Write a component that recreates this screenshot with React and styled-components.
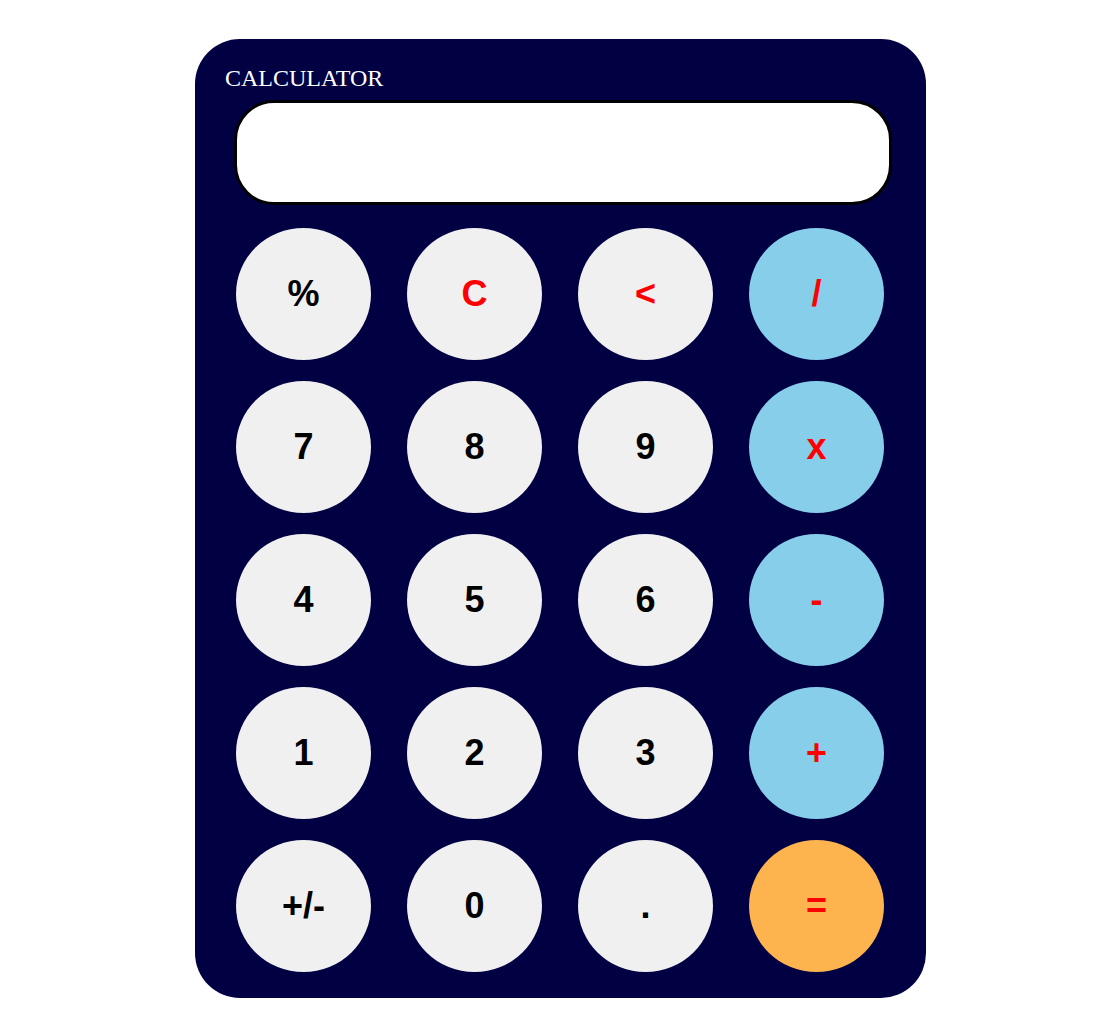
import React from "react";
import styled, { createGlobalStyle } from "styled-components";

const Global = createGlobalStyle`
  html, body { margin: 0; padding: 0; background: #ffffff; }
  body { font-family: "Liberation Serif", "Times New Roman", serif; }
`;

const Page = styled.div`
  padding: 39px 0 29px 195px;
`;

const Panel = styled.div`
  width: 731px;
  box-sizing: border-box;
  background: #000042;
  border-radius: 45px;
  padding: 0 34px 26px 30px;
  display: flex;
  flex-direction: column;
`;

const Title = styled.div`
  margin-top: 26.4px;
  color: #ffffff;
  font-family: "Liberation Serif", "Times New Roman", serif;
  font-size: 24px;
  line-height: 26.9px;
`;

const Display = styled.div`
  margin: 7.5px 0 0 9px;
  height: 105px;
  box-sizing: border-box;
  background: #ffffff;
  border: 3px solid #000000;
  border-radius: 40px;
`;

const Keypad = styled.div`
  margin: 23px 0 0 11px;
  display: grid;
  grid-template-columns: repeat(4, 135px);
  grid-auto-rows: 132px;
  column-gap: 36px;
  row-gap: 21px;
`;

const bg = { num: "#f0f0f0", op: "#87ceeb", eq: "#fdb44f" };

const Key = styled.button`
  border: none;
  padding: 0;
  margin: 0;
  width: 135px;
  height: 132px;
  border-radius: 50%;
  background: ${(p) => bg[p.$kind]};
  color: ${(p) => (p.$red ? "#ff0000" : "#000000")};
  font-family: "Liberation Sans", Arial, sans-serif;
  font-weight: bold;
  font-size: 36px;
  display: flex;
  align-items: center;
  justify-content: center;
  cursor: pointer;
`;

const keys = [
  ["%", "num", false], ["C", "num", true], ["<", "num", true], ["/", "op", true],
  ["7", "num", false], ["8", "num", false], ["9", "num", false], ["x", "op", true],
  ["4", "num", false], ["5", "num", false], ["6", "num", false], ["-", "op", true],
  ["1", "num", false], ["2", "num", false], ["3", "num", false], ["+", "op", true],
  ["+/-", "num", false], ["0", "num", false], [".", "num", false], ["=", "eq", true],
];

export default function App() {
  return (
    <>
      <Global />
      <Page>
        <Panel>
          <Title>CALCULATOR</Title>
          <Display />
          <Keypad>
            {keys.map(([label, kind, red]) => (
              <Key key={label} $kind={kind} $red={red}>
                {label}
              </Key>
            ))}
          </Keypad>
        </Panel>
      </Page>
    </>
  );
}
